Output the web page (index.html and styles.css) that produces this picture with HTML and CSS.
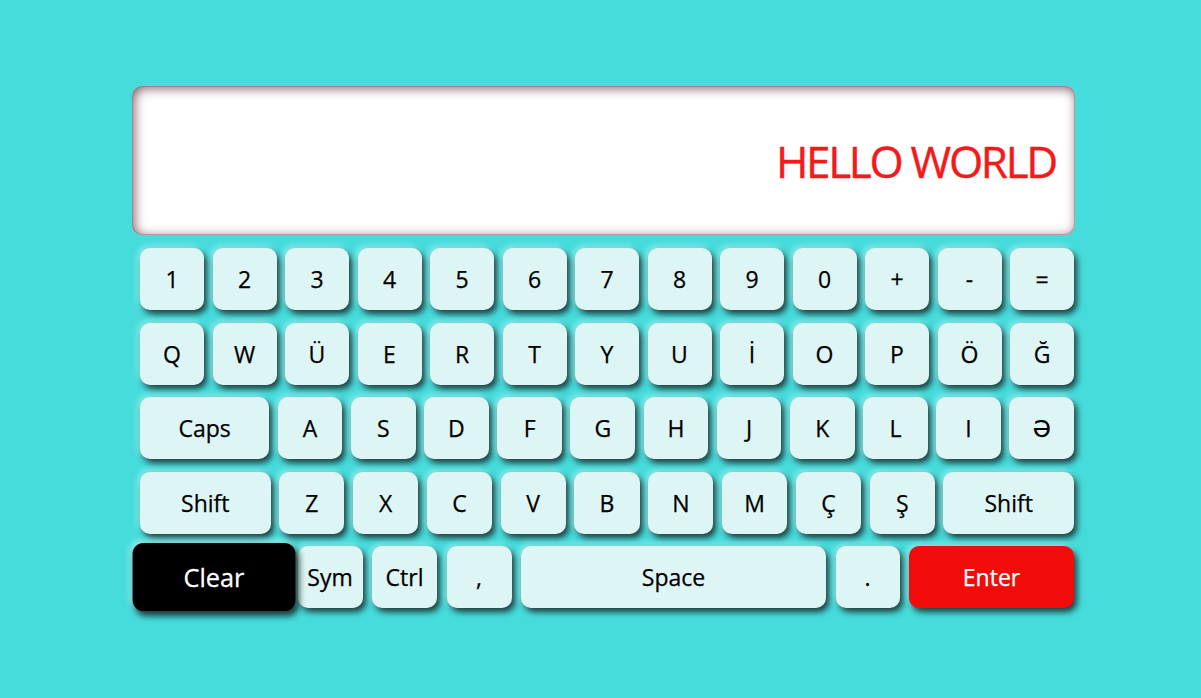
FILE: index.html
```html
<!DOCTYPE html>
<html lang="az">
<head>
<meta charset="utf-8">
<title>Keyboard</title>
<link rel="stylesheet" href="styles.css">
</head>
<body>
<div class="app">
  <div class="display"><span class="output">HELLO WORLD</span></div>
  <div class="keyboard">
    <div class="row">
      <button class="key">1</button><button class="key">2</button><button class="key">3</button><button class="key">4</button><button class="key">5</button><button class="key">6</button><button class="key">7</button><button class="key">8</button><button class="key">9</button><button class="key">0</button><button class="key">+</button><button class="key">-</button><button class="key">=</button>
    </div>
    <div class="row">
      <button class="key">Q</button><button class="key">W</button><button class="key">Ü</button><button class="key">E</button><button class="key">R</button><button class="key">T</button><button class="key">Y</button><button class="key">U</button><button class="key">İ</button><button class="key">O</button><button class="key">P</button><button class="key">Ö</button><button class="key">Ğ</button>
    </div>
    <div class="row">
      <button class="key wide">Caps</button><button class="key">A</button><button class="key">S</button><button class="key">D</button><button class="key">F</button><button class="key">G</button><button class="key">H</button><button class="key">J</button><button class="key">K</button><button class="key">L</button><button class="key">I</button><button class="key">Ə</button>
    </div>
    <div class="row">
      <button class="key wide">Shift</button><button class="key">Z</button><button class="key">X</button><button class="key">C</button><button class="key">V</button><button class="key">B</button><button class="key">N</button><button class="key">M</button><button class="key">Ç</button><button class="key">Ş</button><button class="key wide">Shift</button>
    </div>
    <div class="row bottom">
      <button class="key clear">Clear</button><button class="key sym">Sym</button><button class="key ctrl">Ctrl</button><button class="key comma">,</button><button class="key space">Space</button><button class="key dot">.</button><button class="key enter">Enter</button>
    </div>
  </div>
</div>
</body>
</html>
```
FILE: styles.css
```css
html, body {
  margin: 0;
  padding: 0;
}
body {
  background: #46dcdc;
  font-family: "Open Sans", "DejaVu Sans", sans-serif;
  width: 1201px;
  height: 698px;
  overflow: hidden;
}
.app {
  padding: 86px 0 0 132px;
  width: 943px;
}
.display {
  height: 149px;
  background: #ffffff;
  border-radius: 10px;
  box-shadow: inset 0 0 0 1px rgba(150, 110, 115, 0.5), inset 2px 2px 12px rgba(110, 70, 80, 0.9);
  display: flex;
  align-items: center;
  justify-content: flex-end;
  padding-right: 19px;
}
.output {
  color: #f21a1a;
  font-size: 44px;
  letter-spacing: -2.3px;
  line-height: 1;
  -webkit-text-stroke: 0.4px #f21a1a;
}
.keyboard {
  padding: 13px 1px 0 8px;
  display: flex;
  flex-direction: column;
  gap: 12.5px;
}
.row {
  display: flex;
  gap: 8.5px;
  height: 62px;
}
.key {
  flex: 1 1 0;
  min-width: 0;
  border: none;
  margin: 0;
  padding: 0;
  background: #def5f5;
  color: #000;
  font-family: inherit;
  font-size: 23px;
  -webkit-text-stroke: 0.25px currentColor;
  border-radius: 10px;
  box-shadow: 3px 4px 6px rgba(20, 30, 30, 0.85), -2px -2px 6px rgba(255, 255, 255, 0.45);
  display: flex;
  align-items: center;
  justify-content: center;
}
.key.wide { flex-grow: 2; }
.row.bottom { gap: 9.5px; }
.bottom .clear { flex: 0 0 148px; }
.bottom .sym, .bottom .ctrl, .bottom .comma { flex: 0 0 65px; }
.bottom .space { flex: 0 0 305px; }
.bottom .dot { flex: 0 0 64px; }
.bottom .enter { flex: 1 1 0; }
.clear {
  background: #000;
  color: #fff;
  transform: scale(1.1);
  position: relative;
  z-index: 1;
}
.enter {
  background: #f20b0b;
  color: #fff;
}
```
